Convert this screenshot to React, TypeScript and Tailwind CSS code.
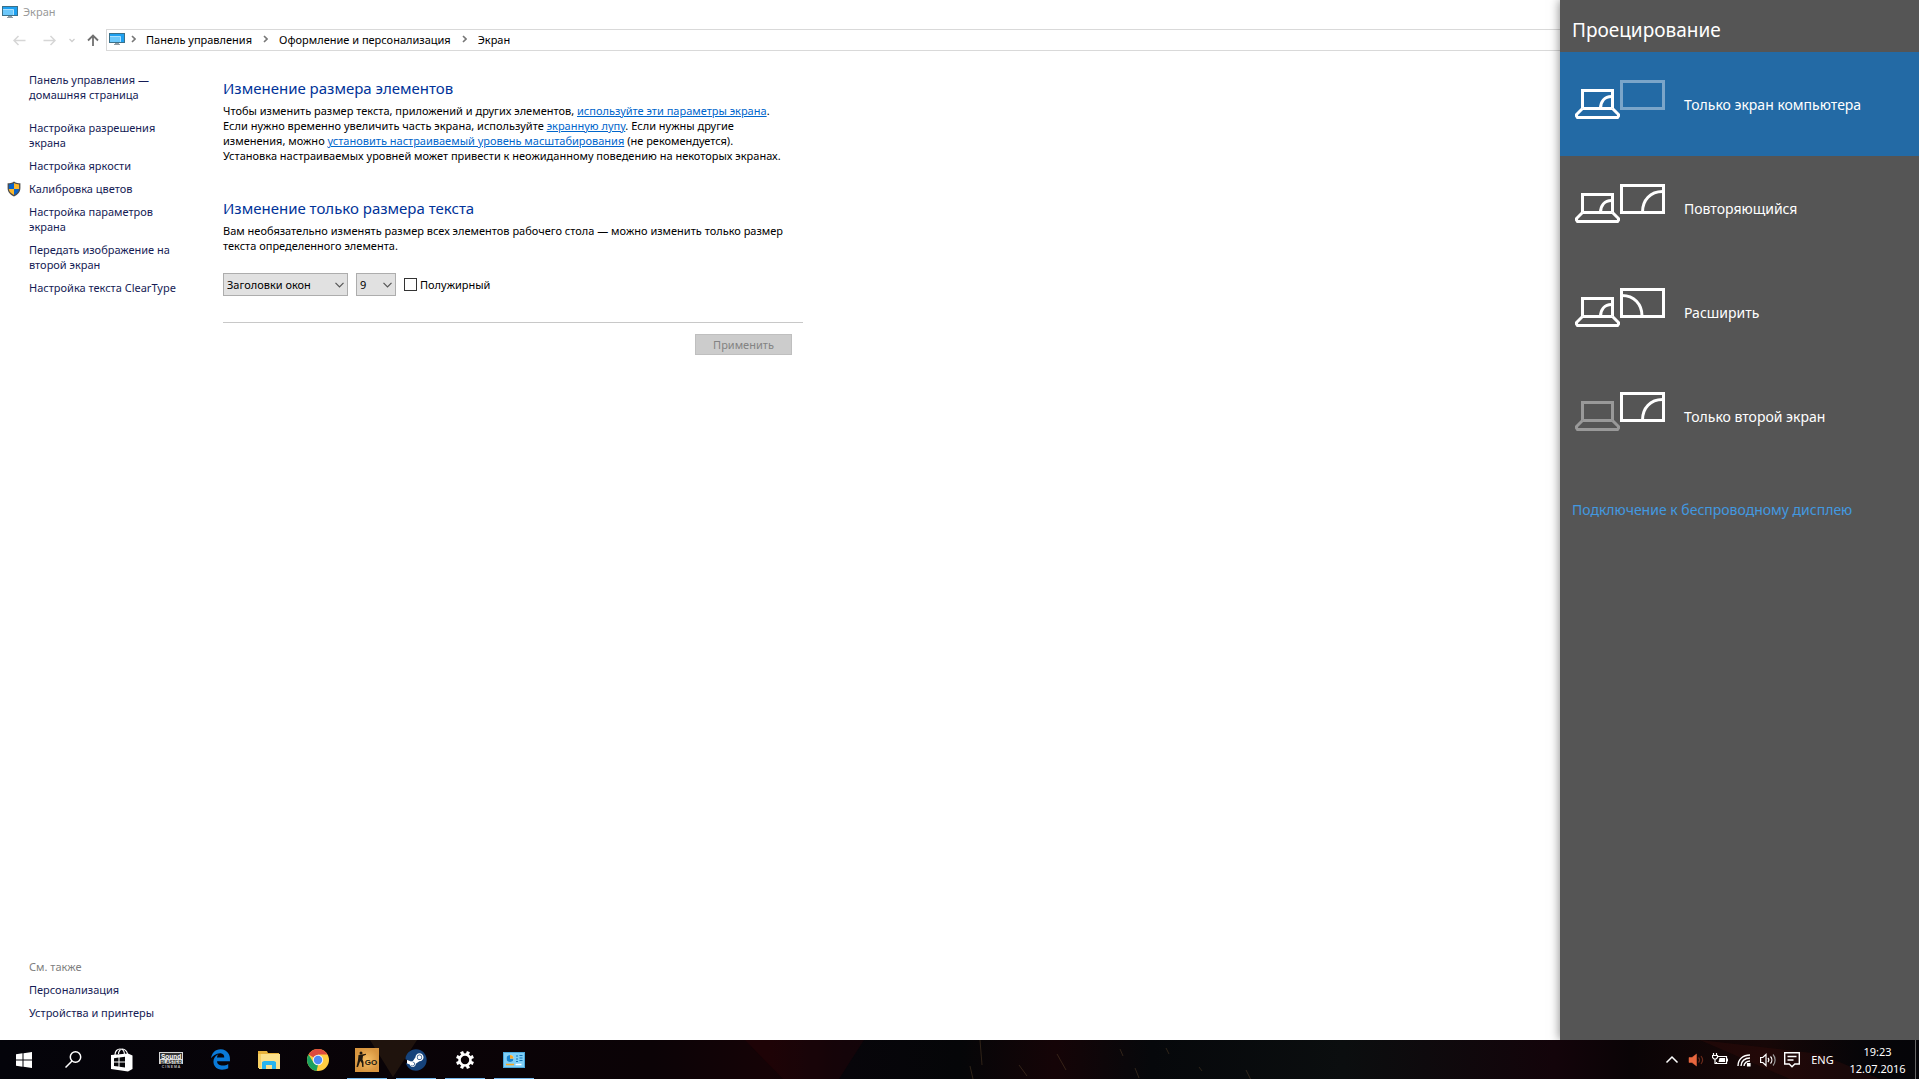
import * as React from "react";
import { FaEdgeLegacy, FaSteam } from "react-icons/fa6";

const sideLinks = [
  { lines: ["Настройка разрешения", "экрана"] },
  { lines: ["Настройка яркости"] },
  { lines: ["Калибровка цветов"], shield: true },
  { lines: ["Настройка параметров", "экрана"] },
  { lines: ["Передать изображение на", "второй экран"] },
  { lines: ["Настройка текста ClearType"] },
];

const crumbs = ["Панель управления", "Оформление и персонализация", "Экран"];

type Arc = "left" | "right" | null;

interface ProjectOption {
  label: string;
  laptop: boolean;
  screen: boolean;
  arc: Arc;
}

const projectOptions: ProjectOption[] = [
  { label: "Только экран компьютера", laptop: true, screen: false, arc: null },
  { label: "Повторяющийся", laptop: true, screen: true, arc: "right" },
  { label: "Расширить", laptop: true, screen: true, arc: "left" },
  { label: "Только второй экран", laptop: false, screen: true, arc: "right" },
];

const MonitorIcon = () => (
  <svg width="16" height="12" viewBox="0 0 16 12" className="shrink-0" aria-hidden="true">
    <rect x="0.5" y="0.5" width="15" height="9" fill="#1ea0f0" stroke="#3b7089" />
    <path d="M1 3h10.500v6H1z" fill="#6cc8fb" />
    <path d="M1 3.500h10.500V9" fill="none" stroke="#a9e0ff" />
    <path d="M6 10h4v1h1v1H5v-1h1z" fill="#8f9ca3" />
  </svg>
);

const ShieldIcon = () => (
  <svg width="14" height="16" viewBox="0 0 14 16" aria-hidden="true">
    <path d="M7 0.5C5 2 2.500 2.200 0.600 2.200V7c0 4 2.400 6.500 6.400 8.500 4-2 6.400-4.500 6.400-8.500V2.200C11.500 2.200 9 2 7 .5z" fill="#4d4d4d" />
    <path d="M7 2C5.300 3.100 3.300 3.400 1.900 3.400V8H7z" fill="#0a63c9" />
    <path d="M7 2c1.700 1.100 3.700 1.400 5.100 1.400V8H7z" fill="#fdb72a" />
    <path d="M1.900 8H7v6C4 12.500 2.200 10.800 1.900 8z" fill="#fdb72a" />
    <path d="M12.100 8H7v6c3-1.500 4.800-3.200 5.100-6z" fill="#0a63c9" />
  </svg>
);

const Chevron = () => (
  <svg width="9" height="6" viewBox="0 0 9 6" fill="none" stroke="#555" strokeWidth="1.200" aria-hidden="true">
    <path d="M0.500 0.800 4.500 4.800 8.500 0.800" />
  </svg>
);

const CrumbArrow = () => (
  <svg width="5" height="8" viewBox="0 0 5 8" fill="none" stroke="#777" strokeWidth="1.600" aria-hidden="true">
    <path d="M1 1l3 3-3 3" />
  </svg>
);

const ProjectIcon: React.FC<ProjectOption> = ({ laptop, screen, arc }) => (
  <svg width="90" height="39" viewBox="0 0 90 39" fill="none" stroke="#fff" strokeWidth="3" className="shrink-0" aria-hidden="true">
    <g opacity={laptop ? 1 : 0.4}>
      <path d="M7.500 28V10.500h30V28M7.500 28.500h30M7.500 28.500 1.500 34.500V36l1 1.500h40l1-1.500v-1.500L37.500 28.500" />
      {laptop && <path d="M25.500 28.500c0-7 4-12 11-12" />}
    </g>
    <g opacity={screen ? 1 : 0.4}>
      <path d="M46.500 1.500h42v27h-42z" />
      {arc === "right" && <path d="M67.500 28c0-12 8-20.500 20-20.500" />}
      {arc === "left" && <path d="M47 7.500c12 0 20 8.500 20 20.500" />}
    </g>
  </svg>
);

const WindowsIcon = () => (
  <svg width="16" height="16" viewBox="0 0 16 16" fill="#fff" aria-hidden="true">
    <path d="M0 2.200 6.500 1.300V7.500H0zM7.500 1.200 16 0v7.500H7.500zM0 8.500h6.500v6.200L0 13.800zM7.500 8.500H16V16l-8.500-1.200z" />
  </svg>
);

const SearchIcon = () => (
  <svg width="17" height="17" viewBox="0 0 17 17" fill="none" stroke="#fff" strokeWidth="1.500" aria-hidden="true">
    <circle cx="10.500" cy="6" r="5.200" />
    <path d="M7 10 .5 16.500" />
  </svg>
);

const StoreIcon = () => (
  <svg width="22" height="24" viewBox="0 0 22 24" aria-hidden="true">
    <path d="M4 7C4 3 6.500 1 9 1s4.500 2 4.500 6M7.500 6c0-3 2-5 4-5s4.500 2 5 5" fill="none" stroke="#fff" strokeWidth="1.200" />
    <path d="M0 7l17-1.500 4.500 2V21L17 23.500 0 21z" fill="#fff" />
    <path d="M3 10.200l4.500-.6v4H3zM8.500 9.500 14 8.800v4.800H8.500zM3 14.600h4.500v4L3 18zM8.500 14.600H14v4.900l-5.500-.8z" fill="#08080a" />
  </svg>
);

const BlasterIcon = () => (
  <svg width="24" height="16" viewBox="0 0 24 16" fontFamily="Liberation Sans, sans-serif" fontWeight="bold" textAnchor="middle" aria-hidden="true">
    <rect width="24" height="12" fill="#d8d8d8" />
    <rect x="1" y="1" width="22" height="6" fill="#333" />
    <text x="12" y="6.500" fontSize="6.500" fill="#fff">Sound</text>
    <text x="12" y="11.500" fontSize="4.500" fill="#222">BLASTER</text>
    <text x="12" y="16" fontSize="3.500" fill="#bbb">C I N E M A</text>
  </svg>
);

const FolderIcon = () => (
  <svg width="22" height="18" viewBox="0 0 22 18" aria-hidden="true">
    <path d="M0 0h9l1 2h11v3H0z" fill="#e8b33c" />
    <path d="M1 3h21v15H1z" fill="#fbe08a" />
    <path d="M0 3h3v14H0z" fill="#f6cf63" />
    <path d="M4 18v-7l2-1h10l2 1v7h-4v-4H8v4z" fill="#27b4ee" />
  </svg>
);

const ChromeIcon = () => (
  <svg width="22" height="22" viewBox="0 0 22 22" aria-hidden="true">
    <circle cx="11" cy="11" r="11" fill="#ffcd40" />
    <path d="M11 11 1.500 5.500A11 11 0 0 1 20.500 5.500H11z" fill="#dd4b3e" />
    <path d="M1.500 5.500 6.500 13.500 11 16 9.500 21.900A11 11 0 0 1 1.500 5.500z" fill="#1aa15f" />
    <circle cx="11" cy="11" r="5.200" fill="#f3f3f3" />
    <circle cx="11" cy="11" r="4.200" fill="#4c8bf5" />
  </svg>
);

const CsgoIcon = () => (
  <svg width="24" height="24" viewBox="0 0 24 24" aria-hidden="true">
    <defs>
      <radialGradient id="sand">
        <stop offset="0" stopColor="#f6c067" />
        <stop offset="1" stopColor="#d8953f" />
      </radialGradient>
    </defs>
    <rect width="24" height="24" fill="url(#sand)" />
    <circle cx="6" cy="5" r="1.500" fill="#20180e" />
    <path d="M3.500 7 7 6.500l4-.8v1L8 8l-.5 3.500L8.500 14v5H7.200l-.4-4L5.200 13 3 19H1.500l1.500-7z" fill="#20180e" />
    <text x="16" y="17" fontSize="8" fontWeight="bold" fontFamily="Liberation Sans, sans-serif" textAnchor="middle" fill="#20180e">GO</text>
  </svg>
);

const SteamIcon = () => (
  <span className="flex size-[22px] items-center justify-center rounded-full bg-[radial-gradient(circle,#fff_60%,transparent_61%)]">
    <FaSteam className="size-[22px] text-[#15427a]" />
  </span>
);

const GearIcon = () => (
  <svg width="18" height="18" viewBox="-9 -9 18 18" fill="none" stroke="#fff" aria-hidden="true">
    <circle r="5.500" strokeWidth="2.600" />
    {[0, 45, 90, 135, 180, 225, 270, 315].map((a) => (
      <path key={a} d="M0-6V-9" strokeWidth="3.200" transform={`rotate(${a + 22.5})`} />
    ))}
  </svg>
);

const PanelIcon = () => (
  <svg width="22" height="16" viewBox="0 0 22 16" aria-hidden="true">
    <rect x="0.500" y="0.500" width="21" height="15" fill="#7fd0f7" stroke="#4aa8dc" />
    <circle cx="7" cy="6.500" r="3.500" fill="#fff" />
    <path d="M7 6.500V3A3.500 3.500 0 1 0 10.500 6.500z" fill="#1684d0" />
    <path d="M7 6.500V3a3.500 3.500 0 0 1 3.500 3.500z" fill="#f9a825" />
    <path d="M13 4h2M13 7h2M13 9.500h2M16.500 3.500h3M16.500 6h3M16.500 8.500h3" stroke="#1473b5" />
    <path d="M3 12.500h8" stroke="#f9a825" strokeWidth="1.500" />
    <path d="M12.500 12.500h6" stroke="#fff" strokeWidth="1.500" />
  </svg>
);

const apps = [
  { name: "Пуск", icon: <WindowsIcon /> },
  { name: "Поиск", icon: <SearchIcon /> },
  { name: "Магазин", icon: <StoreIcon /> },
  { name: "Sound Blaster", icon: <BlasterIcon /> },
  { name: "Edge", icon: <FaEdgeLegacy className="size-[21px] text-[#0a7ad8]" /> },
  { name: "Проводник", icon: <FolderIcon /> },
  { name: "Chrome", icon: <ChromeIcon /> },
  { name: "CS:GO", icon: <CsgoIcon />, open: true },
  { name: "Steam", icon: <SteamIcon />, open: true },
  { name: "Параметры", icon: <GearIcon />, open: true },
  { name: "Панель управления", icon: <PanelIcon />, open: true },
];

const trayIcons = [
  {
    name: "Скрытые значки",
    icon: <path d="M2.500 10.500 8 5l5.500 5.500" strokeWidth="1.500" />,
  },
  {
    name: "Звук Realtek",
    icon: (
      <>
        <path d="M1 5.500h3L8.500 2v12L4 10.500H1z" fill="#e8673f" stroke="#e8673f" strokeWidth="0.500" />
        <path d="M10.500 5.500c1.300 1.500 1.300 3.500 0 5M13 4c2 2.500 2 5.500 0 8" stroke="#6b2a1a" />
      </>
    ),
  },
  {
    name: "Батарея",
    icon: (
      <>
        <path d="M6 4.500h8.500v7H4.500V10M15.500 6.500v3" />
        <path d="M7.500 6h5.500v4H6.500z" fill="#fff" stroke="none" />
        <path d="M1.500 1v2.500M4.500 1v2.500M.5 3.500h5v2L4 7H2L.5 5.500zM3 7v4.500h2" />
      </>
    ),
  },
  {
    name: "Сеть",
    icon: (
      <>
        <path d="M2 14C2 7.500 7 3 14 3M5 14c0-5 4-8 9-8M8 14c0-3 3-5 6-5" strokeWidth="1.400" />
        <path d="M11.500 11.500h2.500V14h-2.500z" fill="#fff" />
      </>
    ),
  },
  {
    name: "Громкость",
    icon: (
      <>
        <path d="M.6 5.500h2.200L6 2.500v11l-3.200-3H.6z" />
        <path d="M8 6c1 1.200 1 2.800 0 4M10.500 4.500c1.800 2 1.800 5 0 7" />
        <path d="M13 2.500c2.800 3.200 2.800 7.800 0 11" stroke="#999" />
      </>
    ),
  },
  {
    name: "Центр уведомлений",
    icon: <path d="M.7.700h14.600v11.300h-4.500L8 14.800 5.200 12H.7zM3.500 4.500h9M3.500 8h6" strokeWidth="1.400" />,
  },
];

const TaskbarWallpaper = () => (
  <svg viewBox="0 0 1919 39" preserveAspectRatio="none" className="absolute inset-0 size-full" aria-hidden="true">
    <defs>
      <linearGradient id="wall">
        <stop offset="0" stopColor="#04040a" />
        <stop offset="0.2" stopColor="#090307" />
        <stop offset="0.34" stopColor="#0b0306" />
        <stop offset="0.4" stopColor="#150306" />
        <stop offset="0.44" stopColor="#07050a" />
        <stop offset="0.5" stopColor="#050608" />
        <stop offset="0.55" stopColor="#150407" />
        <stop offset="0.6" stopColor="#06080b" />
        <stop offset="0.7" stopColor="#0b0e0f" />
        <stop offset="0.81" stopColor="#13040a" />
        <stop offset="0.85" stopColor="#0a0406" />
        <stop offset="0.92" stopColor="#170707" />
        <stop offset="0.97" stopColor="#060508" />
        <stop offset="1" stopColor="#050508" />
      </linearGradient>
    </defs>
    <rect width="1919" height="39" fill="url(#wall)" />
    <path d="M370 0h47l-24 37z" fill="#2a1b10" opacity="0.7" />
    <path d="M745 0l38 39h56l25-39z" fill="#3a0508" opacity="0.25" />
    <path d="M1700 0l120 14 60 25h-90z" fill="#3a0f0c" opacity="0.35" />
    <path d="M980 0l2 25M970 26l3 13M1019 25l8 11M1057 14l9 16M1120 9l3 7M1166 8l3 6M1199 27l3 4M1246 30l5 10M1135 28l4 10" stroke="#6b5030" opacity="0.4" />
  </svg>
);

const linkClass = "text-[#0066cc] underline hover:text-[#3399ff]";

export default function App() {
  const [selected, setSelected] = React.useState(0);

  return (
    <div className="flex h-screen flex-col overflow-hidden bg-white font-['Noto_Sans',sans-serif] text-[11px] leading-[15px] text-black">
      <div className="flex min-h-0 flex-1">
        <div className="flex min-w-0 flex-1 flex-col">
          <header>
            <div className="flex h-[23px] items-center gap-[5px] px-0.5 text-[#999]">
              <MonitorIcon />
              <span>Экран</span>
            </div>
            <nav className="mt-1.5 flex h-[22px] items-stretch">
              <div className="flex w-[106px] items-center pl-[13px]">
                <button aria-label="Назад" className="w-[30px]">
                  <svg width="13" height="11" viewBox="0 0 13 11" fill="none" stroke="#d6d6d6" strokeWidth="1.500">
                    <path d="M12.500 5.500H1M5.500 1 1 5.500l4.500 4.500" />
                  </svg>
                </button>
                <button aria-label="Вперёд" className="w-[26px]">
                  <svg width="13" height="11" viewBox="0 0 13 11" fill="none" stroke="#d6d6d6" strokeWidth="1.500">
                    <path d="M.5 5.500H12M7.500 1 12 5.500 7.500 10" />
                  </svg>
                </button>
                <button aria-label="Журнал" className="w-[18px]">
                  <svg width="6" height="5" viewBox="0 0 6 5" fill="none" stroke="#cfcfcf" strokeWidth="1.300">
                    <path d="M.5 1 3 3.500 5.500 1" />
                  </svg>
                </button>
                <button aria-label="Вверх">
                  <svg width="12" height="12" viewBox="0 0 12 12" fill="none" stroke="#707070" strokeWidth="1.800">
                    <path d="M6 12V1.500M1 6.500l5-5 5 5" />
                  </svg>
                </button>
              </div>
              <div className="flex flex-1 items-center border border-r-0 border-[#d9d9d9] pb-0.5 pl-0.5">
                <MonitorIcon />
                {crumbs.map((crumb, i) => (
                  <React.Fragment key={crumb}>
                    <span className={i === 0 ? "pr-2 pl-1.5" : "px-[9px]"}>
                      <CrumbArrow />
                    </span>
                    <a href="#" className="px-0.5">{crumb}</a>
                  </React.Fragment>
                ))}
              </div>
            </nav>
          </header>

          <div className="flex min-h-0 flex-1 pt-[21px]">
            <aside className="flex w-[223px] flex-col justify-between pb-5 pl-[29px] text-[#151c55]">
              <ul className="flex flex-col gap-2">
                <li className="mb-2.5">
                  <a href="#">Панель управления —<br />домашняя страница</a>
                </li>
                {sideLinks.map((link) => (
                  <li key={link.lines[0]} className="relative">
                    {link.shield && (
                      <span className="absolute top-0 -left-[22px]">
                        <ShieldIcon />
                      </span>
                    )}
                    <a href="#">
                      {link.lines.map((line) => (
                        <span key={line} className="block whitespace-nowrap">{line}</span>
                      ))}
                    </a>
                  </li>
                ))}
              </ul>
              <ul className="flex flex-col gap-2">
                <li className="text-[#808080]">См. также</li>
                <li><a href="#">Персонализация</a></li>
                <li><a href="#">Устройства и принтеры</a></li>
              </ul>
            </aside>

            <main className="w-[580px] whitespace-nowrap pt-1.5">
              <h2 className="text-[15px] leading-5 text-[#003399]">Изменение размера элементов</h2>
              <p className="mt-[5px]">
                Чтобы изменить размер текста, приложений и других элементов,{" "}
                <a href="#" className={linkClass}>используйте эти параметры экрана</a>.<br />
                Если нужно временно увеличить часть экрана, используйте{" "}
                <a href="#" className={linkClass}>экранную лупу</a>. Если нужны другие<br />
                изменения, можно{" "}
                <a href="#" className={linkClass}>установить настраиваемый уровень масштабирования</a> (не рекомендуется).<br />
                Установка настраиваемых уровней может привести к неожиданному поведению на некоторых экранах.
              </p>

              <h2 className="mt-[35px] text-[15px] leading-5 text-[#003399]">Изменение только размера текста</h2>
              <p className="mt-[5px]">
                Вам необязательно изменять размер всех элементов рабочего стола — можно изменить только размер<br />
                текста определенного элемента.
              </p>

              <form className="mt-5" onSubmit={(e) => e.preventDefault()}>
                <div className="flex items-center gap-2">
                  <div className="relative w-[125px]">
                    <select aria-label="Элемент" className="h-[23px] w-full appearance-none border border-[#adadad] bg-[#e1e1e1] pl-[3px]">
                      <option>Заголовки окон</option>
                      <option>Меню</option>
                      <option>Значки</option>
                    </select>
                    <span className="pointer-events-none absolute top-[9px] right-1">
                      <Chevron />
                    </span>
                  </div>
                  <div className="relative w-10">
                    <select aria-label="Размер" className="h-[23px] w-full appearance-none border border-[#adadad] bg-[#e1e1e1] pl-[3px]">
                      <option>9</option>
                      <option>10</option>
                      <option>12</option>
                    </select>
                    <span className="pointer-events-none absolute top-[9px] right-1">
                      <Chevron />
                    </span>
                  </div>
                  <label className="flex items-center gap-[3px]">
                    <input type="checkbox" className="size-[13px] appearance-none border border-[#333] bg-white checked:bg-[#333]" />
                    Полужирный
                  </label>
                </div>
                <hr className="mt-[26px] border-[#c8c8c8]" />
                <div className="mt-[11px] flex justify-end pr-[11px]">
                  <button disabled className="h-[21px] w-[97px] border border-[#bfbfbf] bg-[#cccccc] text-[#838383]">
                    Применить
                  </button>
                </div>
              </form>
            </main>
          </div>
        </div>

        <section className="w-[359px] bg-[#555555] leading-5 text-white shadow-[0_0_10px_rgba(0,0,0,0.5)]">
          <h1 className="flex h-[52px] items-center pt-2 pl-3 text-[19px]">Проецирование</h1>
          {projectOptions.map((option, i) => (
            <button
              key={option.label}
              onClick={() => setSelected(i)}
              className={
                "flex h-[104px] w-full items-start pt-7 pl-[15px] text-left " +
                (selected === i ? "bg-[#236aa5]" : "hover:bg-[#666]")
              }
            >
              <ProjectIcon {...option} />
              <span className="mt-[15px] ml-[19px] text-[14px]">{option.label}</span>
            </button>
          ))}
          <a href="#" className="mt-8 ml-3 block text-[14px] text-[#4299e0]">
            Подключение к беспроводному дисплею
          </a>
        </section>
      </div>

      <footer className="relative z-10 h-[39px] bg-[#050508] text-white">
        <TaskbarWallpaper />
        <div className="relative flex h-full justify-between">
          <div className="flex gap-px">
            {apps.map((app) => (
              <button
                key={app.name}
                aria-label={app.name}
                className="relative flex w-12 items-center justify-center"
              >
                {app.icon}
                {app.open && <span className="absolute inset-x-1 bottom-0 h-px bg-[#76b9ed]" />}
              </button>
            ))}
          </div>
          <div className="flex items-center">
            {trayIcons.map((item) => (
              <button key={item.name} aria-label={item.name} className="flex w-6 justify-center">
                <svg width="16" height="16" viewBox="0 0 16 16" fill="none" stroke="#fff" strokeWidth="1.200" aria-hidden="true">
                  {item.icon}
                </svg>
              </button>
            ))}
            <button className="w-[37px] text-center">ENG</button>
            <button className="w-[73px] text-center leading-[17px]">
              19:23<br />12.07.2016
            </button>
            <span className="ml-px h-full w-1 border-l border-[#666]" />
          </div>
        </div>
      </footer>
    </div>
  );
}
